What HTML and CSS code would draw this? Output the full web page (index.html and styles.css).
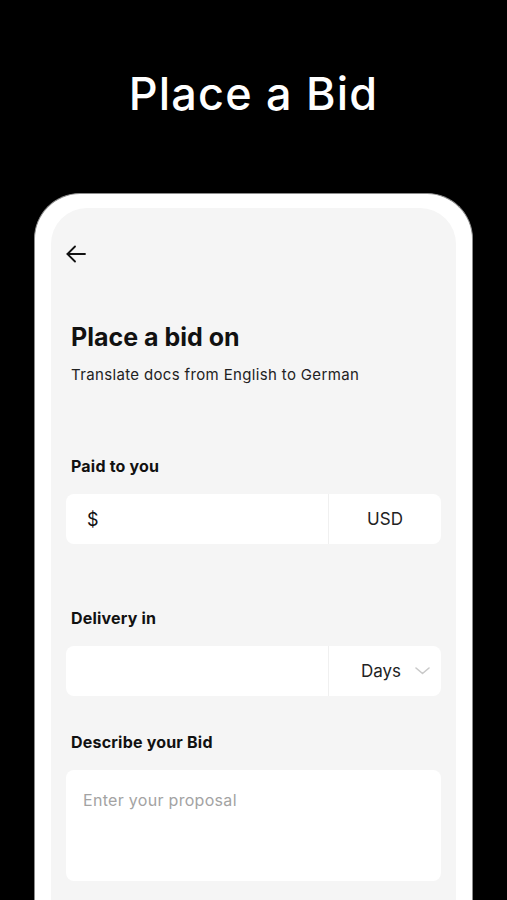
FILE: index.html
```html
<!DOCTYPE html>
<html lang="en">
<head>
    <meta charset="UTF-8">
    <meta name="viewport" content="width=device-width, initial-scale=1.0">
    <title>Place a Bid</title>
    <link rel="stylesheet" href="styles.css">
</head>
<body>
    <header class="hero">
        <h1>Place a Bid</h1>
    </header>

    <div class="phone">
        <div class="screen">
            <button class="back" aria-label="Back">
                <svg width="20" height="18" viewBox="0 0 20 18" fill="none" stroke="#111" stroke-width="1.8" stroke-linecap="round" stroke-linejoin="round">
                    <path d="M19 9H1.5"/>
                    <path d="M9 1.5L1.5 9L9 16.5"/>
                </svg>
            </button>

            <h2 class="title">Place a bid on</h2>
            <p class="subtitle">Translate docs from English to German</p>

            <!-- Monto -->
            <label class="field-label label-paid">Paid to you</label>
            <div class="field">
                <div class="field-main">
                    <span class="currency">$</span>
                </div>
                <div class="field-side">USD</div>
            </div>

            <!-- Entrega -->
            <label class="field-label label-delivery">Delivery in</label>
            <div class="field">
                <div class="field-main"></div>
                <div class="field-side select">
                    <span>Days</span>
                    <svg width="15" height="8" viewBox="0 0 15 8" fill="none" stroke="#c9c9c9" stroke-width="1.6" stroke-linecap="round" stroke-linejoin="round">
                        <path d="M1 1L7.5 6.5L14 1"/>
                    </svg>
                </div>
            </div>

            <!-- Descripción -->
            <label class="field-label label-describe">Describe your Bid</label>
            <div class="textarea">
                <span class="placeholder">Enter your proposal</span>
            </div>
        </div>
    </div>
</body>
</html>
```

FILE: styles.css
```css
/* Base */
body {
    margin: 0;
    background-color: #000;
    font-family: Inter, "Noto Sans", Arial, sans-serif;
    color: #111;
    overflow: hidden;
}

/* Título superior */
.hero {
    padding-top: 71px;
    text-align: center;
}

.hero h1 {
    margin: 0;
    color: #fff;
    font-size: 45px;
    line-height: 45px;
    font-weight: 500;
    letter-spacing: 1.2px;
}

/* Marco del teléfono */
.phone {
    margin: 77px 34px 0;
    padding: 14px 16px 0;
    height: 900px;
    background-color: #fff;
    border: 1px solid #8c8c8c;
    border-bottom: none;
    border-radius: 46px 46px 0 0;
}

.screen {
    height: 100%;
    padding: 37px 15px 0;
    box-sizing: border-box;
    background-color: #f5f5f5;
    border-radius: 36px 36px 0 0;
}

.back {
    display: block;
    margin: 0;
    padding: 0;
    border: none;
    background: none;
    height: 18px;
}

.back svg {
    display: block;
}

/* Encabezado */
.title {
    margin: 58px 0 0 5px;
    font-size: 25px;
    line-height: 32px;
    font-weight: 700;
}

.subtitle {
    margin: 12px 0 0 5px;
    font-size: 15px;
    line-height: 20px;
    letter-spacing: 0.35px;
    color: #222;
}

/* Campos */
.field-label {
    display: block;
    margin-left: 5px;
    font-size: 16px;
    line-height: 20px;
    font-weight: 700;
    letter-spacing: 0.2px;
}

.label-paid {
    margin-top: 71px;
}

.label-delivery {
    margin-top: 64px;
}

.label-describe {
    margin-top: 36px;
}

.field {
    display: flex;
    height: 50px;
    margin-top: 18px;
    background-color: #fff;
    border-radius: 8px;
}

.field-main {
    width: 262px;
    display: flex;
    align-items: center;
    padding-left: 21px;
    box-sizing: border-box;
}

.currency {
    font-size: 18px;
}

.field-side {
    flex: 1;
    display: flex;
    align-items: center;
    justify-content: center;
    border-left: 1px solid #f0f0f0;
    font-size: 17px;
    color: #222;
}

.select {
    justify-content: flex-end;
    gap: 14px;
    padding-right: 11px;
}

.textarea {
    height: 111px;
    margin-top: 18px;
    padding: 20px 17px 0;
    box-sizing: border-box;
    background-color: #fff;
    border-radius: 8px;
}

.placeholder {
    font-size: 16px;
    line-height: 20px;
    letter-spacing: 0.3px;
    color: #a3a3a3;
}
```
